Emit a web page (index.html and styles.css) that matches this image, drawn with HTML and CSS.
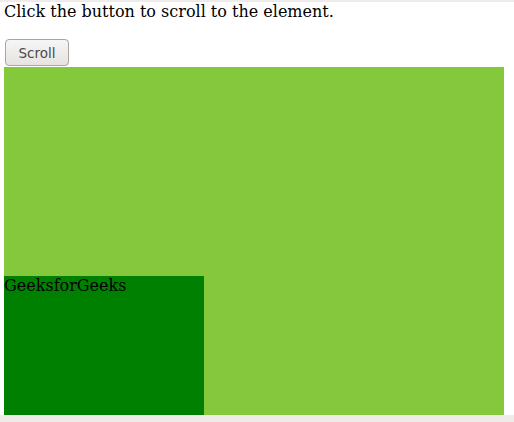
FILE: index.html
```
<!DOCTYPE html>
<html>
<head>
<meta charset="utf-8">
<link rel="stylesheet" href="styles.css">
</head>
<body>
<div class="view">
  <p class="intro">Click the button to scroll to the element.</p>
  <div class="btn-row"><button class="btn">Scroll</button></div>
  <div class="outer">
    <div class="inner">GeeksforGeeks</div>
  </div>
</div>
</body>
</html>
```
FILE: styles.css
```
html, body {
  margin: 0;
  padding: 0;
  background: #efebe8;
  height: 422px;
  overflow: hidden;
}
.view {
  margin-top: 2px;
  height: 413px;
  background: #ffffff;
  overflow: hidden;
  padding-left: 4px;
  font-family: "DejaVu Sans", sans-serif;
  font-family: "DejaVu Serif", serif;
  font-size: 16px;
  color: #000;
}
.intro {
  margin: 0;
  line-height: 20px;
}
.btn-row {
  padding-top: 17px;
  padding-left: 1px;
  height: 28px;
}
.btn {
  display: block;
  width: 64px;
  height: 27px;
  margin: 0;
  padding: 1px 0 0;
  border: 1px solid #aaa59f;
  border-radius: 4px;
  background: linear-gradient(#f7f6f5, #e6e3e0);
  font-family: "DejaVu Sans", sans-serif;
  font-size: 13.5px;
  color: #4a4a4a;
}
.outer {
  width: 500px;
  height: 600px;
  background: #84c93b;
  padding-top: 209px;
  box-sizing: border-box;
}
.inner {
  width: 200px;
  height: 200px;
  background: #008000;
  line-height: 20px;
}
```
